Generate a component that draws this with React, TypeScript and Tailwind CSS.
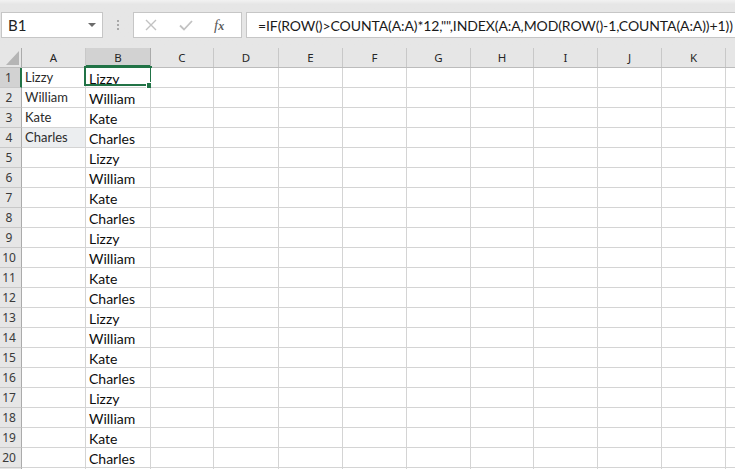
import React from "react";

const COLS: [string, number][] = [
  ["A", 64],
  ["B", 65],
  ["C", 63],
  ["D", 65],
  ["E", 64],
  ["F", 64],
  ["G", 64],
  ["H", 63],
  ["I", 64],
  ["J", 64],
  ["K", 64],
  ["L", 64],
];

const NAMES = ["Lizzy", "William", "Kate", "Charles"];
const FORMULA = '=IF(ROW()>COUNTA(A:A)*12,"",INDEX(A:A,MOD(ROW()-1,COUNTA(A:A))+1))';

const cellFont = { fontFamily: "Lato, 'Open Sans', sans-serif" };
const uiFont = { fontFamily: "'Noto Sans', 'Open Sans', sans-serif" };

function FormulaBar() {
  return (
    <div className="h-[48px] bg-gradient-to-b from-[#f2f2f2] from-0% via-[#e6e6e6] via-[9%] to-[#e6e6e6] pt-[12px] flex items-start">
      {/* name box */}
      <div className="ml-[1px] w-[102px] h-[26px] bg-white border border-[#c6c6c6] flex items-center">
        <span className="pl-[6px] text-[15px] text-[#222] flex-1" style={cellFont}>
          B1
        </span>
        <svg width="8" height="5" viewBox="0 0 8 5" className="mr-[6px]">
          <path d="M0 0h8L4 4z" fill="#6b6b6b" />
        </svg>
      </div>
      {/* grip dots */}
      <div className="ml-[14px] mt-[8px] flex flex-col gap-[2px]">
        <span className="w-[2px] h-[2px] bg-[#a8a8a8]" />
        <span className="w-[2px] h-[2px] bg-[#a8a8a8]" />
        <span className="w-[2px] h-[2px] bg-[#a8a8a8]" />
      </div>
      {/* cancel / enter / fx */}
      <div className="ml-[14px] w-[109px] h-[26px] bg-white border border-[#c6c6c6] flex items-center">
        <svg width="12" height="12" viewBox="0 0 12 12" className="ml-[11px]">
          <path d="M1 1l10 10M11 1L1 11" stroke="#c2c2c2" strokeWidth="1.4" />
        </svg>
        <svg width="14" height="11" viewBox="0 0 14 11" className="ml-[22px]">
          <path d="M1 5.5l4 4L13 1" stroke="#c2c2c2" strokeWidth="1.8" fill="none" />
        </svg>
        <span
          className="ml-[21px] text-[15px] italic text-[#5a5a5a] leading-none"
          style={{ fontFamily: "'Liberation Serif', serif" }}
        >
          f<span className="text-[12px] font-bold italic">x</span>
        </span>
      </div>
      {/* formula input */}
      <div className="ml-[4px] flex-1 min-w-0 h-[26px] bg-white border border-[#c6c6c6] border-r-0 flex items-center overflow-hidden">
        <span className="pl-[11px] text-[14px] text-[#1a1a1a] whitespace-nowrap tracking-[-0.1px]" style={cellFont}>
          {FORMULA}
        </span>
      </div>
    </div>
  );
}

function HeaderRow() {
  return (
    <div className="flex h-[20px] bg-[#e6e6e6] border-b border-[#bcbcbc]">
      <div className="w-[22px] shrink-0 border-r border-[#ababab] flex items-end justify-end pr-[2px] pb-[2px]">
        <svg width="13" height="14" viewBox="0 0 13 14">
          <path d="M13 0V14H0z" fill="#b5b5b5" />
        </svg>
      </div>
      {COLS.map(([c, w]) => {
        const sel = c === "B";
        return (
          <div
            key={c}
            style={{ width: w, ...uiFont }}
            className={`shrink-0 border-r flex items-center justify-center text-[11.5px] text-[#262626] ${
              sel ? "bg-[#d2d2d2] border-[#ababab] shadow-[inset_0_-2px_0_#217346]" : "border-[#c8c8c8]"
            }`}
          >
            {c === "L" ? "" : c}
          </div>
        );
      })}
    </div>
  );
}

function Row({ r }: { r: number }) {
  const last = r > 20;
  const a = r <= 4 ? NAMES[r - 1] : "";
  const b = last ? "" : NAMES[(r - 1) % 4];
  const sel = r === 1;
  return (
    <div className="flex h-[20px]">
      <div
        style={uiFont}
        className={`w-[22px] shrink-0 border-b border-r flex items-center justify-center pr-[3px] text-[12px] text-[#3a3a3a] ${
          sel
            ? "bg-[#d2d2d2] border-b-[#c8c8c8] border-r-[#217346] border-r-2 pr-[2px]"
            : "bg-[#e6e6e6] border-[#c8c8c8] border-r-[#ababab]"
        }`}
      >
        {last ? "" : r}
      </div>
      {COLS.map(([c, w]) => {
        let text = "";
        if (c === "A") text = a;
        if (c === "B") text = b;
        const shaded = c === "A" && r === 4;
        return (
          <div
            key={c}
            style={{ width: w, ...cellFont }}
            className={`relative shrink-0 border-r border-b border-[#d4d4d4] pl-[3px] whitespace-nowrap leading-[19px] ${
              shaded ? "bg-[#eceef0]" : "bg-white"
            } ${c === "B" ? "text-[14px] text-[#0d0d0d] pt-[1px]" : "text-[13px] text-[#2b2b2b]"}`}
          >
            {text}
            {c === "B" && sel && (
              <div className="absolute -left-[2px] -top-[2px] w-[68px] h-[20px] border-2 border-[#217346]">
                <div className="absolute -right-[3px] -bottom-[5px] w-[7px] h-[7px] bg-[#217346] border border-white" />
              </div>
            )}
          </div>
        );
      })}
    </div>
  );
}

export default function App() {
  const rows = Array.from({ length: 21 }, (_, i) => i + 1);
  return (
    <div className="w-[735px] h-[469px] overflow-hidden bg-white">
      <FormulaBar />
      <HeaderRow />
      {rows.map((r) => (
        <Row key={r} r={r} />
      ))}
    </div>
  );
}
